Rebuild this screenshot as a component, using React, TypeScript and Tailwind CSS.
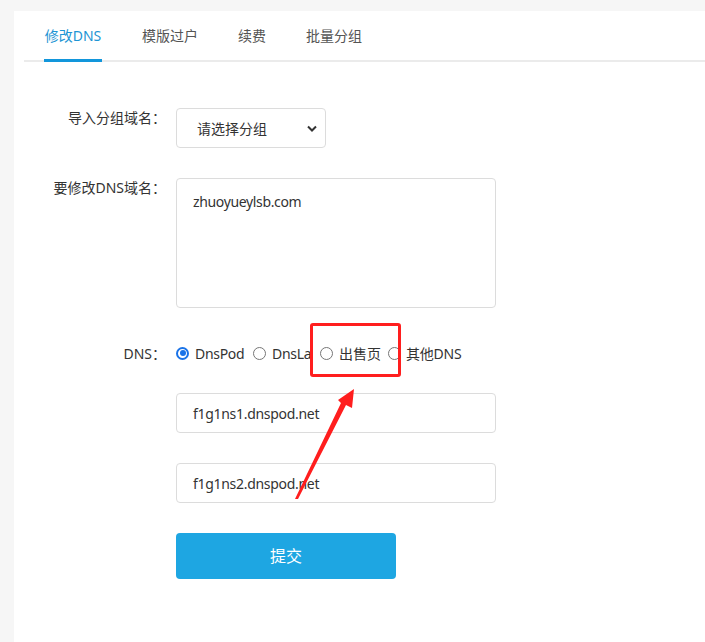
import React from "react";

const font = { fontFamily: '"Noto Sans", "Noto Sans CJK SC", sans-serif' };

function Radio({ checked }: { checked?: boolean }) {
  return checked ? (
    <span className="inline-flex h-[13px] w-[13px] shrink-0 items-center justify-center rounded-full border-2 border-[#1a73e8] bg-white">
      <span className="h-[6px] w-[6px] rounded-full bg-[#1a73e8]" />
    </span>
  ) : (
    <span className="inline-block h-[13px] w-[13px] shrink-0 rounded-full border border-[#767676] bg-white" />
  );
}

export default function App() {
  return (
    <div className="min-h-[642px] bg-[#f6f6f6] pl-[14px] pt-[11px]" style={font}>
      <div className="relative min-h-[631px] bg-white pl-[10px]">
        {/* tabs */}
        <div className="flex h-[51px] gap-10 border-b-2 border-[#ebebeb] pl-5 text-[14px] text-[#555]">
          <div className="relative flex w-[58px] shrink-0 items-center justify-center whitespace-nowrap text-[#1e95d4]">
            修改DNS
            <span className="absolute bottom-[-2px] left-0 right-0 h-[3px] bg-[#1296db]" />
          </div>
          <div className="flex items-center whitespace-nowrap">模版过户</div>
          <div className="flex items-center whitespace-nowrap">续费</div>
          <div className="flex items-center whitespace-nowrap">批量分组</div>
        </div>

        {/* form */}
        <div className="ml-[-10px] flex flex-col pt-[46px] text-[14px] text-[#333]">
          <div className="flex">
            <div className="w-[152px] text-right leading-5">导入分组域名：</div>
            <div className="ml-[10px] flex h-10 w-[150px] items-center justify-between rounded border border-[#dcdcdc] pl-5 pr-[8px]">
              <span>请选择分组</span>
              <svg width="10" height="7" viewBox="0 0 10 7">
                <path d="M1 1.5 L5 5.5 L9 1.5" fill="none" stroke="#333" strokeWidth="2" />
              </svg>
            </div>
          </div>

          <div className="mt-[30px] flex">
            <div className="w-[152px] text-right leading-5">要修改DNS域名：</div>
            <div className="ml-[10px] h-[130px] w-[320px] rounded border border-[#dcdcdc] px-4 pt-[13px] leading-5 tracking-[-0.35px]">
              zhuoyueylsb.com
            </div>
          </div>

          <div className="mt-[35px] flex h-5 items-center">
            <div className="w-[152px] text-right">DNS：</div>
            <div className="ml-[10px] flex items-center">
              <Radio checked />
              <span className="ml-[6px] w-[48px] whitespace-nowrap tracking-[-0.3px]">DnsPod</span>
              <span className="ml-[10px]" />
              <Radio />
              <span className="ml-[6px] w-[38px] whitespace-nowrap tracking-[-0.3px]">DnsLa</span>
              <span className="ml-[10px]" />
              <Radio />
              <span className="ml-[6px] w-[42px] whitespace-nowrap">出售页</span>
              <span className="ml-[7px]" />
              <Radio />
              <span className="ml-[5px] whitespace-nowrap tracking-[-0.2px]">其他DNS</span>
            </div>
          </div>

          <div className="mt-[30px] flex">
            <div className="w-[152px]" />
            <div className="ml-[10px] flex h-10 w-[320px] items-center rounded border border-[#dcdcdc] px-4 tracking-[-0.3px]">
              f1g1ns1.dnspod.net
            </div>
          </div>

          <div className="mt-[30px] flex">
            <div className="w-[152px]" />
            <div className="ml-[10px] flex h-10 w-[320px] items-center rounded border border-[#dcdcdc] px-4 tracking-[-0.3px]">
              f1g1ns2.dnspod.net
            </div>
          </div>

          <div className="mt-[30px] flex">
            <div className="w-[152px]" />
            <button className="ml-[10px] flex h-[46px] w-[220px] items-center justify-center rounded bg-[#1ea6e2] text-[16px] text-white">
              提交
            </button>
          </div>
        </div>

        {/* red highlight box */}
        <div className="absolute left-[296px] top-[312px] h-[54px] w-[91px] rounded-[3px] border-[3px] border-[#ff1e1e]" />

        {/* arrow */}
        <svg
          className="pointer-events-none absolute left-0 top-0"
          width="691"
          height="631"
          viewBox="14 11 691 631"
        >
          <polygon
            points="295,499 341,403 338,400 354,389 352,408 346,405 298,499"
            fill="#ff1e1e"
          />
        </svg>
      </div>
    </div>
  );
}
